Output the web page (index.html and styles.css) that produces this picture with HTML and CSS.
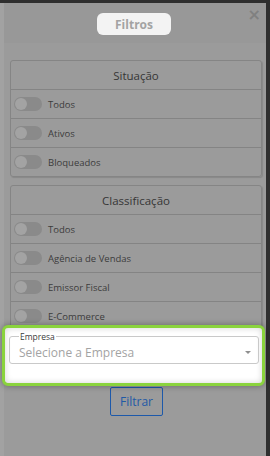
FILE: index.html
```html
<!DOCTYPE html>
<html lang="pt-BR">
<head>
    <meta charset="UTF-8">
    <meta name="viewport" content="width=device-width, initial-scale=1.0">
    <title>Filtros</title>
    <link rel="stylesheet" href="styles.css">
</head>
<body>
    <div class="modal">
        <div class="modal-header">
            <div class="modal-title">Filtros</div>
            <button class="modal-close">×</button>
        </div>

        <div class="modal-body">
            <div class="filter-card">
                <div class="filter-title">Situação</div>
                <div class="filter-row"><span class="toggle"></span>Todos</div>
                <div class="filter-row"><span class="toggle"></span>Ativos</div>
                <div class="filter-row"><span class="toggle"></span>Bloqueados</div>
            </div>

            <div class="filter-card">
                <div class="filter-title">Classificação</div>
                <div class="filter-row"><span class="toggle"></span>Todos</div>
                <div class="filter-row"><span class="toggle"></span>Agência de Vendas</div>
                <div class="filter-row"><span class="toggle"></span>Emissor Fiscal</div>
                <div class="filter-row"><span class="toggle"></span>E-Commerce</div>
            </div>

            <div class="empresa-group">
                <div class="tour-highlight"></div>
                <fieldset class="select-field">
                    <legend>Empresa</legend>
                    <div class="select-value">
                        <span>Selecione a Empresa</span>
                        <span class="caret"></span>
                    </div>
                </fieldset>
            </div>

            <div class="modal-footer">
                <button class="filter-button">Filtrar</button>
            </div>
        </div>
    </div>
</body>
</html>
```

FILE: styles.css
```css
* { margin: 0; padding: 0; box-sizing: border-box; }
body {
    font-family: "Open Sans", "Liberation Sans", sans-serif;
    background: #2f2f2f;
    color: #3f3f3f;
    width: 270px;
    height: 456px;
    overflow: hidden;
}
.modal {
    margin-top: 3px;
    width: 266px;
    height: 453px;
    background: #9b9b9b;
    border-left: 4px solid #a2a2a2;
}
.modal-header {
    height: 40px;
    background: #989898;
    display: flex;
    align-items: center;
    justify-content: center;
    position: relative;
}
.modal-title {
    margin-left: -2px;
    margin-top: 2px;
    width: 74px;
    height: 22px;
    border-radius: 6px;
    background: #f3f3f3;
    color: #a3a3a3;
    font-weight: 700;
    font-size: 12px;
    display: flex;
    align-items: center;
    justify-content: center;
}
.modal-close {
    position: absolute;
    top: 2px;
    right: 5px;
    background: none;
    border: none;
    color: #808080;
    font-size: 16px;
    font-weight: 700;
    font-family: "DejaVu Sans", sans-serif;
}
.modal-body {
    padding: 17px 4px 0 6px;
    display: flex;
    flex-direction: column;
}
.filter-card {
    border: 1px solid #858585;
    border-radius: 3px;
    box-shadow: 1px 1px 1px rgba(0, 0, 0, 0.12);
    margin-bottom: 8px;
}
.filter-title {
    height: 28px;
    display: flex;
    align-items: center;
    justify-content: center;
    font-size: 11.5px;
    color: #363636;
}
.filter-row {
    height: 29px;
    border-top: 1px solid #848484;
    display: flex;
    align-items: center;
    gap: 6px;
    padding-left: 3px;
    font-size: 9.5px;
    color: #3c3c3c;
}
.toggle {
    width: 28px;
    height: 14px;
    border-radius: 7px;
    background: #8a8a8a;
    position: relative;
}
.toggle::before {
    content: "";
    position: absolute;
    left: 1px;
    top: 1px;
    width: 12px;
    height: 12px;
    border-radius: 50%;
    background: #a3a3a3;
}
.empresa-group {
    position: relative;
    margin-top: -7px;
}
.tour-highlight {
    position: absolute;
    top: -7px;
    left: -8px;
    right: -3px;
    bottom: -22px;
    border: 3px solid #8ad33d;
    border-radius: 6px;
    background: #fff;
    box-shadow: 0 0 6px rgba(0, 0, 0, 0.35), inset 0 0 6px rgba(0, 0, 0, 0.18);
}
.select-field {
    position: relative;
    margin: 0 3px 0 -1px;
    border: 1px solid #c9c9c9;
    border-radius: 3px;
    padding: 0 9px;
    height: 32px;
}
.select-field legend {
    font-size: 8.5px;
    color: #3a3a3a;
    padding: 0 1px;
    line-height: 9px;
}
.select-value {
    display: flex;
    align-items: center;
    justify-content: space-between;
    height: 20px;
    font-size: 12px;
    color: #a3a3a3;
    margin-top: 1px;
}
.caret {
    width: 0;
    height: 0;
    border-left: 3px solid transparent;
    border-right: 3px solid transparent;
    border-top: 3px solid #8f8f8f;
    margin-right: -2px;
}
.modal-footer {
    display: flex;
    justify-content: center;
    padding-top: 23px;
}
.filter-button {
    width: 53px;
    height: 29px;
    background: transparent;
    border: 1px solid #1d59aa;
    border-radius: 2px;
    color: #1f59a6;
    font-family: "Open Sans", "Liberation Sans", sans-serif;
    font-size: 12px;
    margin-left: 1px;
}
```
